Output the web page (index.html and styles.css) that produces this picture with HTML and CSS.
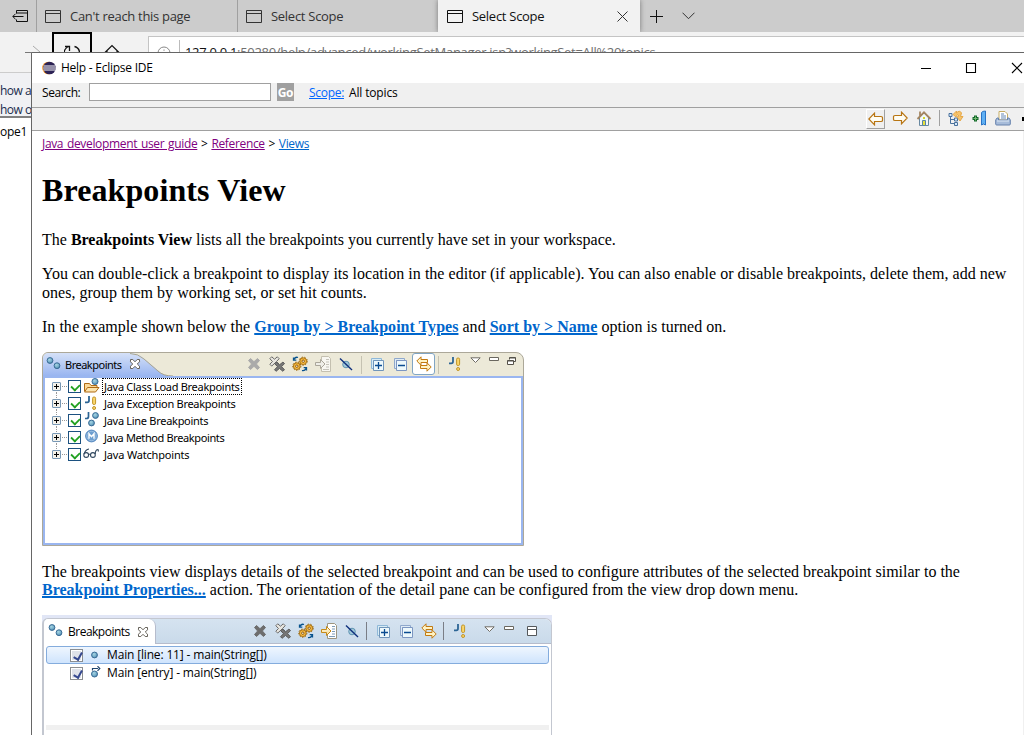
FILE: index.html
```html
<!DOCTYPE html>
<html lang="en">
<head>
<meta charset="utf-8">
<title>Help - Eclipse IDE</title>
<link rel="stylesheet" href="styles.css">
</head>
<body>
<svg class="defs" aria-hidden="true">
  <defs>
    <radialGradient id="ball" cx=".4" cy=".35" r=".7"><stop offset="0" stop-color="#a6d4e2"/><stop offset=".6" stop-color="#74adc9"/><stop offset="1" stop-color="#4480a8"/></radialGradient>
    <linearGradient id="tabblue" x1="0" y1="0" x2="0" y2="1"><stop offset="0" stop-color="#d5e1f8"/><stop offset="1" stop-color="#99b5f0"/></linearGradient>
    <linearGradient id="gold" x1="0" y1="0" x2="0" y2="1"><stop offset="0" stop-color="#fffbe8"/><stop offset="1" stop-color="#f6d98f"/></linearGradient>
    <symbol id="page" viewBox="0 0 16 13"><path d="M.5.5h15v12H.5zM.5 3.500h15" fill="none" stroke="currentColor"/></symbol>
    <symbol id="balls" viewBox="0 0 16 16"><circle cx="4" cy="4.500" r="2.900" fill="url(#ball)" stroke="#3a6c96"/><circle cx="11" cy="9.700" r="2.900" fill="url(#ball)" stroke="#3a6c96"/></symbol>
    <symbol id="viewclose" viewBox="0 0 12 12"><path d="M1.500 1.500h2.300L6 3.800l2.200-2.300h2.300v2.300L8.300 6l2.200 2.200v2.300H8.200L6 8.300l-2.200 2.200H1.500V8.200L3.700 6 1.500 3.800z" fill="#fff" stroke="#66625a"/></symbol>
    <symbol id="remove" viewBox="0 0 16 16"><path d="M4.500 2.500 8 5.700l3.500-3.200 2 2L10.400 8l3.100 3.500-2 2L8 10.300l-3.500 3.200-2-2L5.600 8 2.500 4.500z" fill="currentColor" stroke="currentColor"/></symbol>
    <symbol id="removeall" viewBox="0 0 16 16"><path d="M2.700.8 5.500 3.200 8.300.8l1.900 1.900-2.700 2.800 2.700 2.700-1.900 1.900-2.800-2.600-2.800 2.600-1.900-1.900 2.700-2.700L.8 2.700z" fill="#e7e5df" stroke="#6b6b6b"/><path d="m7 6 3.500 2.800L14 6l1.500 1.700-3 2.900 3 3.100-1.600 1.600-3.400-2.800L7 15.300l-1.500-1.600 3.100-3.100-3.100-2.900z" fill="#777" stroke="#555" stroke-width=".9"/></symbol>
    <symbol id="gears" viewBox="0 0 16 16"><g fill="#f5b942" stroke="#9a6200" stroke-width=".8"><circle cx="4.800" cy="10.200" r="3.400"/><circle cx="11.200" cy="5.200" r="3.400"/></g><g fill="none" stroke="#9a6200" stroke-dasharray="1.400 1.450"><circle cx="4.800" cy="10.200" r="4.100"/><circle cx="11.200" cy="5.200" r="4.100"/></g><circle cx="4.800" cy="10.200" r="1.200" fill="#fff" stroke="#8b5600"/><circle cx="11.200" cy="5.200" r="1.200" fill="#fff" stroke="#8b5600"/><path d="M6 1.500c-2-.8-3 0-4 1.700M1.500 1.500v2.700h2.800M10 14.500c2 .6 3 0 4-2M14.500 14.500v-2.800h-2.800" fill="none" stroke="#07528d" stroke-width="1.300"/></symbol>
    <symbol id="goto" viewBox="0 0 16 16"><path d="M6.500.5h7l2 2v13h-9z" fill="#fff" stroke="#9c9580"/><path d="M11 3.500h3M11 6h3M11 8.500h3M11 11h3M8 13.500h6" stroke="#7c9bb8"/><path d="M.5 6.500h5V3.500L10 8l-4.500 4.500v-3h-5z" fill="url(#gold)" stroke="#c58a1a"/></symbol>
    <symbol id="gotooff" viewBox="0 0 16 16"><path d="M6.500.5h7l2 2v13h-9z" fill="#f8f7f2" stroke="#c4c0b0"/><path d="M11 3.500h3M11 6h3M11 8.500h3M11 11h3M8 13.500h6" stroke="#c4c2b9"/><path d="M.5 6.500h5V3.500L10 8l-4.500 4.500v-3h-5z" fill="#efeee8" stroke="#aaa69a"/></symbol>
    <symbol id="skip" viewBox="0 0 16 16"><circle cx="8" cy="8.500" r="3.300" fill="#a2c9d9" stroke="#5f93b2"/><path d="M2 2.500 14 14" stroke="#0e2f7c" stroke-width="1.400"/></symbol>
    <symbol id="expand" viewBox="0 0 16 16"><path d="M2.500 12.500v-10h10v2h-8v8z" fill="#d8ecf5" stroke="#8fb8d8"/><path d="M4.500 4.500h10v10h-10z" fill="#eef9fc" stroke="#7095ba"/><path d="M6 9.500h7M9.500 6v7" stroke="#0b4c91" stroke-width="1.300"/></symbol>
    <symbol id="collapse" viewBox="0 0 16 16"><path d="M2.500 12.500v-10h10v2h-8v8z" fill="#e0ecf5" stroke="#8fa8cc"/><path d="M4.500 4.500h10v10h-10z" fill="#eef9fc" stroke="#7c96c2"/><path d="M6 9.500h7" stroke="#0b4c91" stroke-width="1.300"/></symbol>
    <symbol id="link" viewBox="0 0 16 16"><path d="M5 .8.800 5 5 9.200V6.500h6.500v-3H5z" fill="#fff3c4" stroke="#c27a12"/><path d="M11 6.800 15.200 11 11 15.200V12.500H4.500v-3H11z" fill="#fff3c4" stroke="#c27a12"/></symbol>
    <symbol id="jex" viewBox="0 0 16 16"><path d="M5 1v4.500Q5 7.300 3.300 7.300H1" fill="none" stroke="#2c6595" stroke-width="1.800"/><rect x="8.600" y="2" width="3" height="7.500" rx="1.300" fill="#fad66c" stroke="#c1952a"/><circle cx="10.100" cy="13" r="1.500" fill="#fad66c" stroke="#c1952a"/></symbol>
    <symbol id="menu" viewBox="0 0 11 7"><path d="M.8.800h9.400L5.500 5.500z" fill="#fff" stroke="#706d65"/></symbol>
    <symbol id="min" viewBox="0 0 11 5"><path d="M.5.5h9v3h-9z" fill="#fff" stroke="#6a675f"/></symbol>
    <symbol id="restore" viewBox="0 0 10 9"><path d="M2.500 2.500v-2h6v4h-2" fill="#fff" stroke="#55524a"/><path d="M.5 3.500h6v4h-6z" fill="#fff" stroke="#55524a"/><path d="M.5 4h6M2.500 1h6" stroke="#55524a"/></symbol>
    <symbol id="max" viewBox="0 0 10 11"><path d="M.5.5h9v9h-9zM.5 3.500h9" fill="#fff" stroke="#55585b"/></symbol>
    <symbol id="back" viewBox="0 0 16 14"><path d="M6.500 1.200.8 7l5.700 5.800V9.500H13q1.500 0 1.500-1V5.500q0-1-1.500-1H6.500z" fill="#fffdf3" stroke="#b87512" stroke-width="1.200"/></symbol>
    <symbol id="home" viewBox="0 0 16 16"><path d="M3.500 7.500v8h9v-8L8 3z" fill="#f2f9fa" stroke="#6888a0"/><path d="M4 1.500v5M1.500 9 8 2.300 14.500 9" fill="none" stroke="#a48662" stroke-width="1.800"/><path d="M6.500 10.500h3v5h-3z" fill="#e9e23c" stroke="#5884a7"/><path d="M7 7h2v2H7z" fill="#d4d72b"/></symbol>
    <symbol id="toc" viewBox="0 0 16 16"><path d="M2.500 5v8.500h4M3 9.500h3.500" fill="none" stroke="#49719d"/><path d="M1 3.500h3v3H1zM6.500 8h3v3h-3zM6.500 12.500h3v3h-3z" fill="#d7e9f8" stroke="#49719d"/><path d="M5 4.500 8.500 1v2q3-3.500 5 0l-1 3.500h2.500l-3 4.500-3-4 2-1L9.500 4.500 8 7z" fill="#f6c36b" stroke="#e5a84a"/></symbol>
    <symbol id="bookmark" viewBox="0 0 16 16"><path d="M4.500 5.500v6M1.500 8.500h6" stroke="#126b2a" stroke-width="3"/><path d="M4.500 6.500v4M2.500 8.500h4" stroke="#7abb75"/><path d="M10.500 2.500q1-1.500 4-1.500v14l-2-1-2 1z" fill="#60b0f3" stroke="#2873c5"/></symbol>
    <symbol id="print" viewBox="0 0 16 16"><path d="M4 1.500h6l2.500 2.500v6H4z" fill="#fff" stroke="#c6ad65"/><path d="M6 4h3M6 6h5M6 8h5" stroke="#6588b6"/><path d="M3.500 8H2L.7 10v4q0 1 1 1h12.600q1 0 1-1v-4L14 8h-1.500v2h-9z" fill="#a7bcda" stroke="#6682ad"/><path d="M2 11h12" stroke="#dfe9f4"/></symbol>
    <symbol id="folder" viewBox="0 0 18 16"><path d="M1.500 13V5.500h5l1.500 2h6V10" fill="#fbd999" stroke="#ae6a14"/><path d="m1.500 14 3-4.500h11.500l-3.500 4.500z" fill="#fbe4ae" stroke="#ae6a14"/><circle cx="12" cy="3.500" r="3" fill="url(#ball)" stroke="#3a6c96"/></symbol>
    <symbol id="jball" viewBox="0 0 18 16"><path d="M5.500 0v4.500q0 2-2 2H2" fill="none" stroke="#2c6595" stroke-width="1.700"/><circle cx="12.500" cy="3.500" r="2.900" fill="url(#ball)" stroke="#3a6c96"/><circle cx="8.500" cy="11" r="2.900" fill="url(#ball)" stroke="#3a6c96"/></symbol>
    <symbol id="method" viewBox="0 0 18 16"><circle cx="8.500" cy="7" r="5.900" fill="#6e9fd0" stroke="#5a8ac0"/><circle cx="8.500" cy="7" r="4.700" fill="none" stroke="#a9c8e6" stroke-width=".7"/><path d="M6 9.800V4.700l2.500 3 2.500-3v5.100" fill="none" stroke="#fff" stroke-width="1.400"/></symbol>
    <symbol id="glasses" viewBox="0 0 18 16"><g fill="none" stroke="#31485f" stroke-width="1.100"><circle cx="3.200" cy="9" r="2.400"/><circle cx="9.900" cy="9" r="2.400"/><path d="M1 8Q2.500 3.500 6 3M5.600 8.200h1.900M12.200 8Q12.500 3.500 15 3.500l.5 2"/></g></symbol>
    <symbol id="bpentry" viewBox="0 0 12 14"><circle cx="4.500" cy="8" r="3" fill="url(#ball)" stroke="#3a6c96"/><path d="M2.500 4.500V2.500h5.500M7.500.2 9.800 2.500 7.500 4.800" fill="none" stroke="#20456d" stroke-width="1.200"/></symbol>
  </defs>
</svg>

<div class="browser">
  <div class="tabs">
    <div class="aside"><svg width="17" height="13" viewBox="0 0 17 13"><path d="M4.500 3.500v-3h11v11h-11v-2M4.500 3h11M.8 6.500h10.700M3.500 3.800.8 6.500l2.700 2.700" fill="none" stroke="#111"/></svg></div>
    <div class="tab"><svg class="page"><use href="#page"/></svg><span class="t1">Can't reach this page</span></div>
    <div class="tab"><svg class="page"><use href="#page"/></svg><span class="t2">Select Scope</span></div>
    <div class="tab active"><svg class="page"><use href="#page"/></svg><span class="t2">Select Scope</span><svg class="tabclose" viewBox="0 0 11 11"><path d="m.5.5 10 10M10.500.5l-10 10" stroke="#333"/></svg></div>
    <svg class="plus" viewBox="0 0 13 13"><path d="M6.500 0v13M0 6.500h13" stroke="#111"/></svg>
    <svg class="chev" viewBox="0 0 13 8"><path d="m.5.7 6 6 6-6" fill="none" stroke="#333"/></svg>
  </div>
  <div class="address">
    <svg class="fwd" viewBox="0 0 9 14"><path d="m1 1 7 6-7 6" fill="none" stroke="#aaa"/></svg>
    <div class="reload"><svg width="16" height="16" viewBox="0 0 16 16"><path d="M5 1.500A6.800 6.800 0 0 0 5 14.500M10.500 1.500a6.800 6.800 0 0 1 .5 13M1 1.500h4.500V6" fill="none" stroke="#111" stroke-width="1.300"/></svg></div>
    <svg class="house" viewBox="0 0 16 16"><path d="M1 8.500 8 1.500l7 7M3 7v8h10V7" fill="none" stroke="#111" stroke-width="1.200"/></svg>
    <div class="url"><svg class="info" viewBox="0 0 14 14"><circle cx="7" cy="7" r="6" fill="none" stroke="#888"/><path d="M7 3.500v1.300M7 6v5" stroke="#888"/></svg><span class="addr"><b>127.0.0.1</b>:50280/help/advanced/workingSetManager.jsp?workingSet=All%20topics</span></div>
  </div>
  <div class="sidepage">
    <div class="showlinks"><div>how a</div><div>how o</div></div>
    <div class="scope">ope1</div>
  </div>
</div>

<div class="window">
  <div class="titlebar">
    <svg class="logo" viewBox="0 0 14 14"><circle cx="6.500" cy="7" r="6.300" fill="#f7941e"/><circle cx="7.500" cy="7" r="6.300" fill="#2c2255"/><path d="M1.500 5h12M1.200 7h12.600M1.500 9h12" stroke="#fff"/></svg>
    <span class="title">Help - Eclipse IDE</span>
    <svg class="controls" viewBox="0 0 102 12"><path d="M.0 6.500h10M45.500 1.500h9v9h-9zM91 1l10 10M101 1 91 11" fill="none" stroke="#000" stroke-width="1.100"/></svg>
  </div>
  <div class="search">
    <span class="slabel">Search:</span><span class="field"></span><span class="go">Go</span><a class="scopelink">Scope:</a><span class="all">All topics</span>
  </div>
  <div class="helpbar">
    <span class="raised"><svg width="16" height="14"><use href="#back"/></svg></span>
    <svg class="forward" width="16" height="14"><use href="#back"/></svg>
    <svg class="i16 homei"><use href="#home"/></svg>
    <i class="hsep"></i>
    <svg class="i16"><use href="#toc"/></svg>
    <svg class="i16 bm"><use href="#bookmark"/></svg>
    <svg class="i16 pr"><use href="#print"/></svg>
    <i class="dot"></i>
  </div>
  <div class="doc">
    <div class="crumbs"><a class="visited">Java development user guide</a> &gt; <a class="visited">Reference</a> &gt; <a>Views</a></div>
    <h1>Breakpoints View</h1>
    <p>The <b>Breakpoints View</b> lists all the breakpoints you currently have set in your workspace.</p>
    <p class="loose">You can double-click a breakpoint to display its location in the editor (if applicable). You can also enable or disable breakpoints, delete them, add new<br>ones, group them by working set, or set hit counts.</p>
    <p class="loose">In the example shown below the <a>Group by &gt; Breakpoint Types</a> and <a>Sort by &gt; Name</a> option is turned on.</p>

    <div class="view xp">
      <div class="strip">
        <div class="vtab">
          <svg class="shape" viewBox="0 0 130 23"><path d="M0 23V5Q0 0 5 0h82q8 0 14 5.500l14 12Q120 23 130 23z" fill="url(#tabblue)"/><path d="M87 .5q8 0 14 5.500l14 12q5 5 15 5" fill="none" stroke="#aaa68f"/></svg>
          <svg class="i16"><use href="#balls"/></svg><span class="vname">Breakpoints</span><svg class="vclose"><use href="#viewclose"/></svg>
        </div>
        <div class="tools">
          <svg class="i16 dim"><use href="#remove"/></svg><svg class="i16"><use href="#removeall"/></svg><svg class="i16"><use href="#gears"/></svg><svg class="i16"><use href="#gotooff"/></svg><svg class="i16"><use href="#skip"/></svg>
          <i class="sep"></i>
          <svg class="i16"><use href="#expand"/></svg><svg class="i16"><use href="#collapse"/></svg><span class="pressed"><svg class="i16"><use href="#link"/></svg></span>
          <i class="sep"></i>
          <svg class="i16"><use href="#jex"/></svg>
          <svg class="menu"><use href="#menu"/></svg><svg class="min"><use href="#min"/></svg><svg class="restore"><use href="#restore"/></svg>
        </div>
      </div>
      <div class="tree">
        <div class="row"><i class="plusbox"></i><i class="check"></i><svg class="kind"><use href="#folder"/></svg><span class="sel">Java Class Load Breakpoints</span></div>
        <div class="row"><i class="plusbox"></i><i class="check"></i><svg class="kind"><use href="#jex"/></svg><span>Java Exception Breakpoints</span></div>
        <div class="row"><i class="plusbox"></i><i class="check"></i><svg class="kind"><use href="#jball"/></svg><span>Java Line Breakpoints</span></div>
        <div class="row"><i class="plusbox"></i><i class="check"></i><svg class="kind"><use href="#method"/></svg><span class="meth">Java Method Breakpoints</span></div>
        <div class="row"><i class="plusbox"></i><i class="check"></i><svg class="kind"><use href="#glasses"/></svg><span class="watch">Java Watchpoints</span></div>
      </div>
    </div>

    <p>The breakpoints view displays details of the selected breakpoint and can be used to configure attributes of the selected breakpoint similar to the<br><a>Breakpoint Properties...</a> action. The orientation of the detail pane can be configured from the view drop down menu.</p>

    <div class="view win7">
      <div class="frame">
        <div class="strip">
          <div class="vtab"><svg class="i16"><use href="#balls"/></svg><span class="vname">Breakpoints</span><svg class="vclose"><use href="#viewclose"/></svg></div>
          <div class="tools">
            <svg class="i16 solid"><use href="#remove"/></svg><svg class="i16"><use href="#removeall"/></svg><svg class="i16"><use href="#gears"/></svg><svg class="i16"><use href="#goto"/></svg><svg class="i16"><use href="#skip"/></svg>
            <i class="sep"></i>
            <svg class="i16"><use href="#expand"/></svg><svg class="i16"><use href="#collapse"/></svg><svg class="i16"><use href="#link"/></svg>
            <i class="sep"></i>
            <svg class="i16 jx"><use href="#jex"/></svg>
            <svg class="menu"><use href="#menu"/></svg><svg class="min"><use href="#min"/></svg><svg class="max"><use href="#max"/></svg>
          </div>
        </div>
        <div class="list">
          <div class="item selected"><i class="check7"></i><svg class="bp" viewBox="0 0 12 14"><circle cx="4.500" cy="7" r="2.900" fill="url(#ball)" stroke="#3a6c96"/></svg><span class="m1">Main [line: 11] - main(String[])</span></div>
          <div class="item"><i class="check7"></i><svg class="bp"><use href="#bpentry"/></svg><span class="m2">Main [entry] - main(String[])</span></div>
        </div>
        <div class="sash"></div>
      </div>
    </div>
  </div>
</div>
</body>
</html>
```

FILE: styles.css
```css
* { box-sizing: border-box; }
html, body { margin: 0; width: 1024px; height: 735px; overflow: hidden; background: #fff; }
body { position: relative; font: 12px/16px "Open Sans", "Noto Sans", sans-serif; color: #000; }
svg { display: block; flex: none; }
i { display: block; flex: none; }
span, a { white-space: nowrap; }
.defs { position: absolute; width: 0; height: 0; }

/* Browser behind the help window */
.tabs { display: flex; height: 32px; background: #ccc; align-items: center; }
.aside { width: 36px; height: 32px; padding: 10px 0 0 12px; }
.tab { display: flex; align-items: center; width: 201px; height: 32px; padding-left: 8px; border-left: 1px solid #a0a0a0; color: #333; font-size: 13px; }
.page { width: 16px; height: 13px; margin-right: 9px; }
.tab.active { width: 202px; background: #f2f2f2; border: 0; padding-left: 9px; color: #111; box-shadow: 0 0 5px #777; clip-path: inset(0 -6px 0 -6px); }
.tabclose { width: 11px; height: 11px; margin-left: 73px; }
.plus { width: 13px; height: 13px; margin-left: 10px; }
.chev { width: 13px; height: 8px; margin-left: 19px; }
.t1 { letter-spacing: -.3px; }
.t2 { letter-spacing: -.28px; margin-top: -1px; }
.t1 { margin-top: -1px; }
.address { display: flex; height: 41px; background: #f2f2f2; border-bottom: 1px solid #ccc; }
.fwd { width: 9px; height: 14px; margin: 13px 0 0 32px; }
.reload { width: 40px; height: 40px; margin-left: 11px; border: 2px solid #000; padding: 11px 0 0 10px; }
.house { width: 16px; height: 16px; margin: 12px 0 0 12px; }
.url { display: flex; flex: 1; margin: 4px 0 0 28px; border: 1px solid #c4c4c4; border-right: 0; background: #fff; font-size: 13px; color: #707070; }
.info { width: 14px; height: 14px; margin: 9px 8px 0 8px; }
.addr { border-left: 1px solid #bbb; height: 26px; margin-top: 3px; padding: 3px 0 0 5px; line-height: 18px; letter-spacing: -.31px; }
.addr b { font-weight: 400; color: #111; }
.sidepage { width: 31px; background: #fff; white-space: nowrap; }
.showlinks { height: 45px; padding-top: 8px; background: #f0f1f4; border-bottom: 2px solid #808080; color: #1a2c4c; line-height: 19px; letter-spacing: -.5px; }
.scope { padding-top: 6px; font-size: 12px; letter-spacing: -.3px; }

/* Help window */
.window { position: absolute; left: 31px; top: 52px; width: 993px; height: 683px; background: #fff; border: solid #666; border-width: 1px 0 0 1px; }
.window::before { content: ""; position: absolute; left: -7px; top: -1px; width: 7px; height: 1px; background: #777; }
.titlebar { display: flex; align-items: center; height: 30px; padding: 0 2px 0 10px; }
.logo { width: 14px; height: 14px; margin-right: 5px; }
.title { flex: 1; letter-spacing: -.25px; }
.controls { width: 102px; height: 12px; margin: -1px -1px 0 0; }
.search { display: flex; align-items: center; height: 25px; padding: 0 0 6px 10px; background: #f0f0f0; border-bottom: 1px solid #a0a0a0; }
.slabel { width: 47px; letter-spacing: -.4px; }
.slabel, .scopelink, .all { padding-top: 1px; }
.field { width: 182px; height: 18px; border: 1px solid #a0a0a0; background: #fff; }
.go { width: 17px; height: 18px; margin: 0 15px 0 6px; background: #a0a0a0; color: #fff; font-weight: 700; text-align: center; line-height: 19px; letter-spacing: -.3px; }
.scopelink { width: 40px; text-decoration: underline; color: #0066ff; letter-spacing: -.3px; }
.all { letter-spacing: -.15px; }
.helpbar { display: flex; align-items: center; height: 23px; background: #f0f0f0; border-bottom: 1px solid #a0a0a0; padding: 0 0 1px 834px; }
.i16 { width: 16px; height: 16px; }
.raised { width: 20px; height: 20px; padding: 2px 0 0 1px; border: 1px solid; border-color: #fff #a0a0a0 #a0a0a0 #fff; }
.forward { transform: scaleX(-1); margin: 0 8px 0 7px; }
.homei { margin-right: 7px; }
.helpbar > .i16, .helpbar > .forward, .hsep { margin-top: -1px; }
.hsep { width: 1px; height: 16px; margin-right: 8px; background: #a0a0a0; }
.bm { margin-left: 7px; }
.pr { margin-left: 8px; }
.dot { width: 2px; height: 4px; margin-left: 11px; background: #000; }

/* Topic */
.doc { height: 604px; padding: 5px 0 0 10px; overflow: hidden; border-right: 1px solid #f0f0f0; font: 16px/18.4px "Liberation Serif", serif; }
.crumbs { height: 16px; font: 12px/16px "Open Sans", sans-serif; word-spacing: 1px; letter-spacing: -.34px; }
a { color: #0066cc; text-decoration: underline; }
.visited { color: #800080; }
h1 { margin: 20px 0 22px; font-size: 32px; line-height: 37px; letter-spacing: .1px; }
p { margin: 0 0 15.700px; white-space: nowrap; }
.loose { letter-spacing: .024px; }
p a { font-weight: 700; text-decoration-thickness: 2px; }

.view { font: 11px/17px "Noto Sans", sans-serif; }
.strip, .vtab, .tools { display: flex; }
.tools { gap: 7px; }
.sep { width: 1px; height: 18px; margin: 3px 0 0; background: #c5c2b2; }
.vclose { width: 12px; height: 12px; }

/* Classic theme view */
.xp { width: 482px; height: 194px; margin-bottom: 17px; border: 1px solid #aca899; border-radius: 6px 8px 0 0; background: #ece9d8; overflow: hidden; }
.xp .strip { height: 23px; }
.xp .vtab { position: relative; width: 203px; padding: 3px 0 0 3px; }
.shape { position: absolute; left: 0; top: 0; width: 130px; height: 23px; }
.xp .vtab > :not(.shape) { position: relative; }
.xp .vname { width: 64px; margin: 0 0 0 3px; letter-spacing: -.5px; }
.xp .vclose { margin: 2px 0 0; }
.xp .tools > .i16 { margin-top: 3px; }
.dim { color: #aaa; }
.solid { color: #6d6d6d; }
.pressed { width: 23px; height: 22px; margin: 0 -4px 0 -3px; padding: 2px 3px; border: 1px solid #80a5c4; border-radius: 3px; background: #fff; }
.xp .tools .pressed + .sep + .i16 { margin-left: 2px; }
.menu { width: 11px; height: 7px; margin: 4px 0 0 -1px; }
.min { width: 11px; height: 5px; margin: 4px 0 0 1px; }
.restore { width: 10px; height: 9px; margin: 4px 0 0; }
.tree { height: 169px; border: 2px solid #9ab6f0; background: #fff; }
.row { display: flex; align-items: center; height: 17px; padding-left: 7px; letter-spacing: -.29px; }
.plusbox { position: relative; width: 9px; height: 9px; margin-right: 7px; border: 1px solid #7898b5; border-radius: 1px; background: linear-gradient(#000, #000) center/5px 1px no-repeat, linear-gradient(#000, #000) center/1px 5px no-repeat, #f3f1ea; }
.plusbox::before { content: ""; position: absolute; left: 9px; top: 3px; width: 5px; border-top: 1px dotted #999; }
.plusbox::after { content: ""; position: absolute; left: 3px; top: 9px; height: 6px; border-left: 1px dotted #999; }
.row:last-child .plusbox::after { display: none; }
.check { position: relative; width: 13px; height: 13px; margin-right: 2px; border: 1px solid #1c5180; background: #fff; }
.check::after { content: ""; position: absolute; left: 2px; top: 2px; width: 7px; height: 5px; border: solid #21a121; border-width: 0 0 2px 2px; transform: rotate(-45deg) scale(.9); }
.kind { width: 18px; height: 16px; margin-right: 2px; }
.row span { padding: 0 1px; }
.row .sel { outline: 1px dotted #000; line-height: 15px; }
.row .watch { letter-spacing: -.18px; }
.row .meth { letter-spacing: -.38px; }

/* Aero theme view */
.win7 { width: 510px; height: 125px; padding: 3px 0 0; background: #e1e6f6; font: 12px/16px "Open Sans", sans-serif; }
.frame { height: 122px; border: solid #c3c7d0; border-width: 1px 1px 0 2px; border-radius: 6px 7px 0 0; background: #fff; overflow: hidden; }
.win7 .strip { height: 25px; background: linear-gradient(#d5e3f0, #c9daea); border-bottom: 1px solid #b6bccc; }
.win7 .vtab { width: 112px; height: 25px; padding: 4px 0 0 4px; background: #fff; border-right: 1px solid #b6bccc; border-radius: 0 7px 0 0; }
.win7 .vname { width: 69px; margin: 1px 0 0 4px; letter-spacing: -.5px; }
.win7 .vclose { margin-top: 3px; }
.win7 .tools { padding: 0 0 0 96px; }
.win7 .tools > .i16 { margin-top: 4px; }
.win7 .sep { margin: 3px 1px 0 -1px; background: #7a7e86; }
.win7 .jx { margin-left: 1px; }
.win7 .menu { margin: 7px 0 0 8px; }
.win7 .min { margin: 7px 0 0 2px; }
.max { width: 10px; height: 11px; margin: 7px 0 0 5px; }
.list { height: 81px; padding: 2px 2px 0; }
.item { display: flex; align-items: center; height: 18px; padding-left: 23px; border: 1px solid transparent; border-radius: 3px; }
.selected { border-color: #84acdd; background: linear-gradient(#eff6fe, #cfe4fd); }
.check7 { position: relative; width: 13px; height: 13px; margin-right: 7px; border: 1px solid #8b8e91; background: #dfe2e9; box-shadow: inset 0 0 0 1px #fff; }
.check7::after { content: ""; position: absolute; left: 4px; top: 1px; width: 4px; height: 7px; border: solid #35488f; border-width: 0 2px 2px 0; transform: rotate(30deg); }
.bp { width: 12px; height: 14px; margin-right: 5px; }
.m1, .m2 { letter-spacing: -.16px; }
.sash { height: 5px; margin: 0 2px; background: #f0f0f0; }
```
